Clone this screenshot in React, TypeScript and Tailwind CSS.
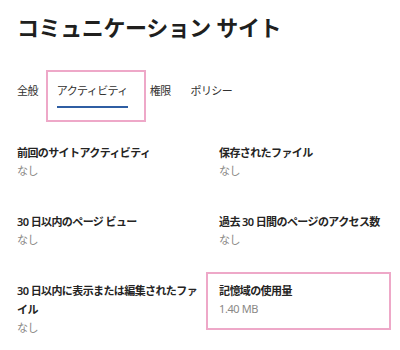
import { Fragment } from "react";

const font = { fontFamily: '"Noto Sans", "Noto Sans CJK JP", sans-serif' };

type Item = { label: string[]; value: string; highlight?: boolean };

const items: Item[] = [
  { label: ["前回のサイトアクティビティ"], value: "なし" },
  { label: ["保存されたファイル"], value: "なし" },
  { label: ["30 日以内のページ ビュー"], value: "なし" },
  { label: ["過去 30 日間のページのアクセス数"], value: "なし" },
  { label: ["30 日以内に表示または編集されたファ", "イル"], value: "なし" },
  { label: ["記憶域の使用量"], value: "1.40 MB", highlight: true },
];

function Stat({ item }: { item: Item }) {
  return (
    <div className="relative">
      {item.highlight && (
        <span className="absolute -left-[13px] -top-[9px] w-[185px] h-[58px] border-2 border-[#eea8c8] pointer-events-none" />
      )}
      <div className="text-[11px] leading-[19px] font-semibold text-[#252423] tracking-[-0.6px] whitespace-nowrap">
        {item.label.map((l, i) => (
          <Fragment key={i}>
            {i > 0 && <br />}
            {l}
          </Fragment>
        ))}
      </div>
      <div className="text-[11px] leading-[17px] text-[#8a8886] tracking-[-0.4px]">{item.value}</div>
    </div>
  );
}

export default function App() {
  return (
    <div className="w-[400px] h-[350px] bg-white overflow-hidden pl-[17px]" style={font}>
      <h1 className="pt-[13px] text-[22px] leading-[28px] font-bold text-[#201f1e] tracking-[-0.4px]">
        コミュニケーション サイト
      </h1>

      <div className="mt-[40px] flex text-[11px] leading-[20px] text-[#323130] tracking-[-0.6px]">
        <span>全般</span>
        <span className="relative ml-[19px]">
          <span className="absolute -left-[11px] -top-[11px] w-[100px] h-[52px] border-2 border-[#eea8c8]" />
          アクティビティ
          <span className="absolute left-0 right-0 top-[25px] h-[2px] bg-[#2f5ea3]" />
        </span>
        <span className="ml-[22px]">権限</span>
        <span className="ml-[20px]">ポリシー</span>
      </div>

      <div className="mt-[42px] grid grid-cols-[202px_1fr] gap-y-[33px]">
        {items.map((it) => (
          <Stat key={it.label[0]} item={it} />
        ))}
      </div>
    </div>
  );
}
